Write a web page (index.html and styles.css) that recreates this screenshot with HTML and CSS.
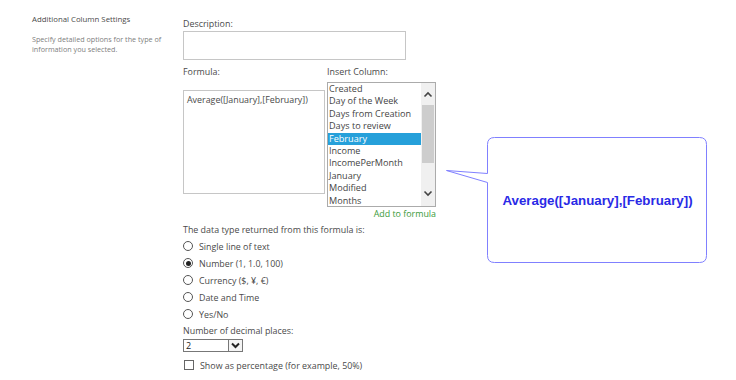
FILE: index.html
```html
<!DOCTYPE html>
<html>
<head>
<meta charset="utf-8">
<link rel="stylesheet" href="styles.css">
</head>
<body>
<div class="page">
  <div class="side">
    <div class="side-title">Additional Column Settings</div>
    <div class="side-desc">Specify detailed options for the type of information you selected.</div>
  </div>
  <div class="main">
    <div class="lbl first">Description:</div>
    <div class="desc-box"></div>
    <div class="formula-row">
      <div class="fcol">
        <div class="lbl">Formula:</div>
        <div class="ta">Average([January],[February])</div>
      </div>
      <div class="icol">
        <div class="lbl">Insert Column:</div>
        <div class="list">
          <div class="opts">
            <div class="opt">Created</div>
            <div class="opt">Day of the Week</div>
            <div class="opt">Days from Creation</div>
            <div class="opt">Days to review</div>
            <div class="opt sel">February</div>
            <div class="opt">Income</div>
            <div class="opt">IncomePerMonth</div>
            <div class="opt">January</div>
            <div class="opt">Modified</div>
            <div class="opt">Months</div>
          </div>
          <div class="sbar">
            <svg class="arr" width="14" height="14" viewBox="0 0 14 14"><path d="M3.5 8.5 L7 5 L10.5 8.5" fill="none" stroke="#444" stroke-width="1.6"/></svg>
            <div class="thumb"></div>
            <div class="track"></div>
            <svg class="arr" width="14" height="14" viewBox="0 0 14 14"><path d="M3.5 5.5 L7 9 L10.5 5.5" fill="none" stroke="#444" stroke-width="1.6"/></svg>
          </div>
        </div>
        <div class="add">Add to formula</div>
      </div>
    </div>
    <div class="lbl dt">The data type returned from this formula is:</div>
    <div class="radios">
      <div class="radio"><span class="rb"></span>Single line of text</div>
      <div class="radio"><span class="rb on"></span>Number (1, 1.0, 100)</div>
      <div class="radio"><span class="rb"></span>Currency ($, ¥, €)</div>
      <div class="radio"><span class="rb"></span>Date and Time</div>
      <div class="radio"><span class="rb"></span>Yes/No</div>
    </div>
    <div class="lbl dec">Number of decimal places:</div>
    <div class="select"><span class="sv">2</span><span class="sbtn"><svg width="13" height="11" viewBox="0 0 13 11"><path d="M3 3.5 L6.5 7 L10 3.5" fill="none" stroke="#222" stroke-width="2"/></svg></span></div>
    <div class="check"><span class="cb"></span>Show as percentage (for example, 50%)</div>
  </div>
</div>
<svg class="callout" width="270" height="130" viewBox="0 0 270 130">
  <path d="M41.5 36.5 L41.5 7.5 Q41.5 0.5 48.5 0.5 L253.5 0.5 Q260.5 0.5 260.5 7.5 L260.5 118.5 Q260.5 125.5 253.5 125.5 L48.5 125.5 Q41.5 125.5 41.5 118.5 L41.5 45.5 L0.5 33.5 Z" fill="#fff" stroke="#8080ff" stroke-width="1"/>
</svg>
<div class="callout-text">Average([January],[February])</div>
</body>
</html>
```

FILE: styles.css
```css
html, body {
  margin: 0;
  padding: 0;
  background: #fff;
}
body {
  font-family: "Open Sans", "Noto Sans", sans-serif;
  color: #4a4a4a;
  position: relative;
  width: 736px;
  height: 380px;
  overflow: hidden;
}
.page {
  display: flex;
  padding-top: 13px;
}
.side {
  width: 151px;
  padding-left: 32px;
}
.side-title {
  font-size: 7.8px;
  line-height: 12px;
  color: #4a4a4a;
}
.side-desc {
  margin-top: 9px;
  font-size: 7.2px;
  line-height: 10px;
  color: #808080;
  width: 136px;
}
.main {
  display: flex;
  flex-direction: column;
  align-items: flex-start;
  font-size: 9px;
}
.lbl {
  font-size: 8.9px;
  line-height: 12px;
  color: #4a4a4a;
  margin-top: 2px;
}
.lbl.first {
  margin-top: 5px;
}
.desc-box {
  width: 221px;
  height: 27px;
  border: 1px solid #c6c6c6;
  margin-top: 1px;
}
.formula-row {
  display: flex;
  margin-top: 4px;
}
.fcol {
  width: 144px;
}
.ta {
  margin-top: 12px;
  width: 134px;
  height: 96px;
  border: 1px solid #c6c6c6;
  padding: 3px 3px;
  font-size: 8.9px;
  line-height: 12px;
  color: #4a4a4a;
}
.icol {
  display: flex;
  flex-direction: column;
  align-items: flex-end;
}
.icol .lbl {
  align-self: flex-start;
}
.list {
  display: flex;
  margin-top: 4px;
  width: 107px;
  height: 123px;
  border: 1px solid #ababab;
  background: #fff;
}
.opts {
  flex: 1;
  padding-top: 0;
}
.opt {
  height: 12.4px;
  line-height: 12.4px;
  font-size: 9.1px;
  padding-left: 1px;
  color: #444;
  white-space: nowrap;
}
.opt.sel {
  background: #26a0da;
  color: #fff;
}
.sbar {
  width: 14px;
  display: flex;
  flex-direction: column;
  background: #f0f0f0;
}
.arr {
  display: block;
  height: 14px;
  margin-top: 5px;
}
.sbar .arr:last-child {
  margin-top: 0;
  margin-bottom: 6px;
}
.thumb {
  margin: 3px 1px 0 1px;
  height: 58px;
  background: #cdcdcd;
}
.track {
  flex: 1;
}
.add {
  margin-top: 1px;
  font-size: 8.9px;
  line-height: 12px;
  color: #3a9a3a;
}
.lbl.dt {
  margin-top: 4px;
}
.radios {
  display: flex;
  flex-direction: column;
  margin-top: 1.5px;
}
.radio {
  display: flex;
  align-items: center;
  height: 17px;
  font-size: 8.9px;
  color: #4a4a4a;
}
.rb {
  width: 10px;
  height: 10px;
  border: 1px solid #555;
  border-radius: 50%;
  margin: 0 6px 0 0;
  box-sizing: border-box;
  display: flex;
  align-items: center;
  justify-content: center;
}
.rb.on::after {
  content: "";
  width: 5px;
  height: 5px;
  border-radius: 50%;
  background: #222;
}
.lbl.dec {
  margin-top: 2.5px;
}
.select {
  display: flex;
  width: 58px;
  height: 11px;
  border: 1px solid #777;
  margin-top: 2px;
}
.sv {
  flex: 1;
  font-size: 9px;
  line-height: 11px;
  padding-left: 2px;
  color: #222;
}
.sbtn {
  width: 13px;
  border-left: 1px solid #777;
  display: flex;
  align-items: center;
  justify-content: center;
  background: #f4f4f4;
}
.sbtn svg {
  display: block;
}
.check {
  display: flex;
  align-items: center;
  height: 14px;
  margin-top: 6px;
  font-size: 8.9px;
  color: #4a4a4a;
}
.cb {
  width: 10px;
  height: 10px;
  box-sizing: border-box;
  border: 1px solid #666;
  margin: 0 6px 0 1px;
}
.callout {
  position: absolute;
  left: 446px;
  top: 137px;
  display: block;
}
.callout-text {
  position: absolute;
  left: 488px;
  top: 138px;
  width: 219px;
  height: 125px;
  display: flex;
  align-items: center;
  justify-content: center;
  font-family: "Liberation Sans", Arial, sans-serif;
  font-weight: bold;
  font-size: 13.3px;
  color: #2a2ae6;
}
```
